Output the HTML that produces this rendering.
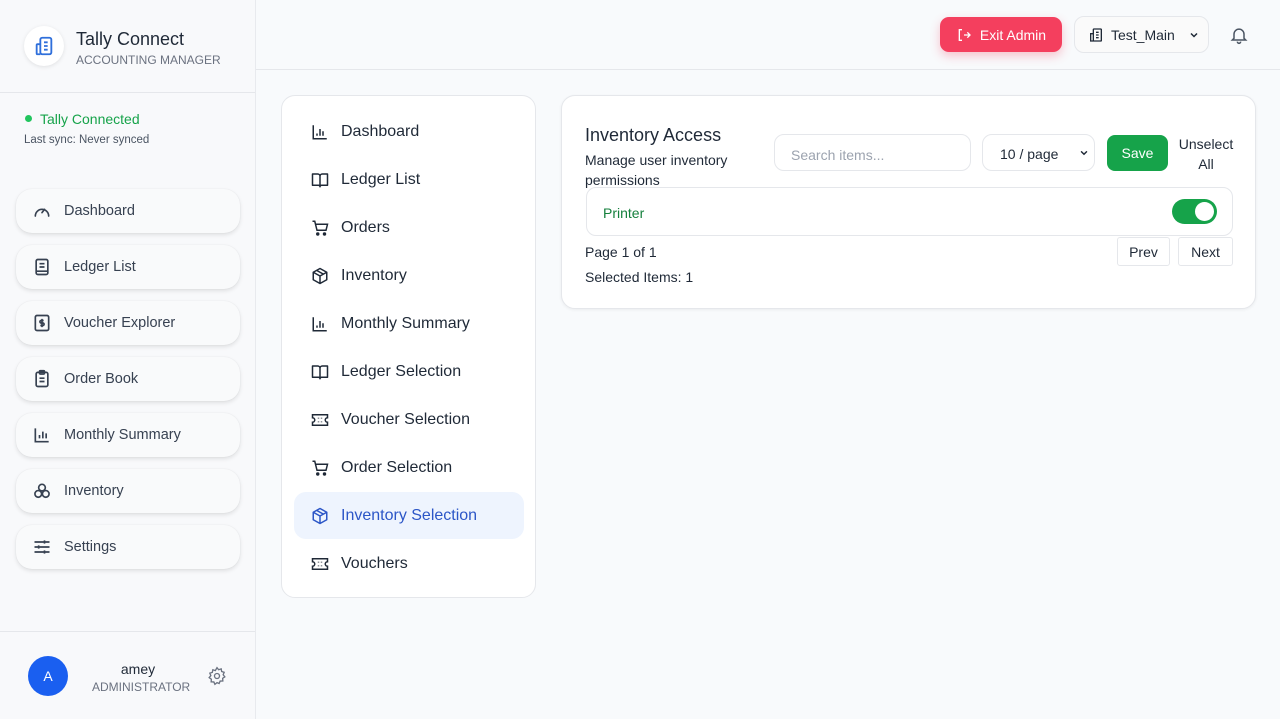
<!DOCTYPE html>
<html><head><meta charset="utf-8"><style>
*{box-sizing:border-box;margin:0;padding:0}
body{width:1280px;height:719px;overflow:hidden;background:#f8fafc;font-family:"Liberation Sans",sans-serif;color:#1f2937;position:relative}
.side{position:absolute;left:0;top:0;width:256px;height:719px;background:#f8f9fb;border-right:1px solid #e8eaee}
.logo{position:absolute;left:24px;top:26px;width:40px;height:40px;border-radius:50%;background:#fff;box-shadow:0 1px 4px rgba(0,0,0,.1);display:flex;align-items:center;justify-content:center}
.abs{position:absolute}
.nb{position:absolute;left:16px;width:224px;height:44px;border-radius:16px;background:#f9fafb;box-shadow:0 2px 4px rgba(0,0,0,.1),0 0 1px rgba(0,0,0,.1);display:flex;align-items:center;padding-left:16px;font-size:14.5px;color:#374151}
.nb svg{margin-right:12px}
.hdr{position:absolute;left:256px;top:0;right:0;height:70px;border-bottom:1px solid #e5e7eb}
.card{position:absolute;background:#fff;border:1px solid #e5e7eb;border-radius:14px}
.mi{position:absolute;left:12px;width:230px;height:47px;display:flex;align-items:center;padding-left:17px;font-size:16px;color:#1f2937;border-radius:12px}
.mi svg{margin-right:12px}
.mi.act{background:#eef4fe;color:#2c56c7}
</style></head><body>
<div class="side">
 <div class="logo"><svg width="22" height="22" viewBox="0 0 24 24" fill="none" stroke="#2f6fdb" stroke-width="2" stroke-linejoin="round"><rect x="8" y="3" width="12" height="18" rx="2"/><path d="M8 10H5a1 1 0 0 0-1 1v9a1 1 0 0 0 1 1h3M12 8h4M12 12h4M12 16h4"/></svg></div>
 <div class="abs" style="left:76px;top:29px;font-size:18px;color:#1f2937">Tally Connect</div>
 <div class="abs" style="left:76px;top:53px;font-size:12px;color:#6b7280">ACCOUNTING MANAGER</div>
 <div class="abs" style="left:0;top:92px;width:255px;border-top:1px solid #e5e7eb"></div>
 <div class="abs" style="left:25px;top:115px;width:7px;height:7px;border-radius:50%;background:#22c55e"></div>
 <div class="abs" style="left:40px;top:111px;font-size:14px;color:#16a34a">Tally Connected</div>
 <div class="abs" style="left:24px;top:134px;font-size:11.5px;color:#4b5563">Last sync: Never synced</div>
 <div class="nb" style="top:189px"><svg width="20" height="20" viewBox="0 0 24 24" fill="none" stroke="#374151" stroke-width="2" stroke-linecap="round"><path d="M4 18a8 8 0 1 1 16 0M12 14l3-4"/></svg>Dashboard</div>
 <div class="nb" style="top:245px"><svg width="20" height="20" viewBox="0 0 24 24" fill="none" stroke="#374151" stroke-width="2"><rect x="5" y="3" width="14" height="18" rx="2"/><path d="M9 8h6M9 12h6M5 17h14"/></svg>Ledger List</div>
 <div class="nb" style="top:301px"><svg width="20" height="20" viewBox="0 0 24 24" fill="none" stroke="#374151" stroke-width="2"><rect x="4" y="3" width="16" height="18" rx="2"/><path d="M14 9h-3a1.5 1.5 0 0 0 0 3h2a1.5 1.5 0 0 1 0 3h-3M12 7v10"/></svg>Voucher Explorer</div>
 <div class="nb" style="top:357px"><svg width="20" height="20" viewBox="0 0 24 24" fill="none" stroke="#374151" stroke-width="2"><rect x="5" y="4" width="14" height="17" rx="2"/><rect x="9" y="2" width="6" height="4" rx="1"/><path d="M9 11h6M9 15h6"/></svg>Order Book</div>
 <div class="nb" style="top:413px"><svg width="20" height="20" viewBox="0 0 24 24" fill="none" stroke="#374151" stroke-width="2"><path d="M4 4v16h16M9 16v-4M13 16V8M17 16v-6"/></svg>Monthly Summary</div>
 <div class="nb" style="top:469px"><svg width="20" height="20" viewBox="0 0 24 24" fill="none" stroke="#374151" stroke-width="2"><circle cx="12" cy="8" r="4"/><circle cx="7.5" cy="15.5" r="4"/><circle cx="16.5" cy="15.5" r="4"/></svg>Inventory</div>
 <div class="nb" style="top:525px"><svg width="20" height="20" viewBox="0 0 24 24" fill="none" stroke="#374151" stroke-width="2"><path d="M3 6h18M3 12h18M3 18h18M15 4v4M8 10v4M15 16v4"/></svg>Settings</div>
 <div class="abs" style="left:0;top:631px;width:255px;border-top:1px solid #e5e7eb"></div>
 <div class="abs" style="left:28px;top:656px;width:40px;height:40px;border-radius:50%;background:#1a5ff0;color:#fff;font-size:14px;display:flex;align-items:center;justify-content:center">A</div>
 <div class="abs" style="left:92px;top:661px;width:92px;text-align:center;font-size:14px;color:#1f2937">amey</div>
 <div class="abs" style="left:92px;top:680px;font-size:12px;color:#6b7280">ADMINISTRATOR</div>
 <svg class="abs" style="left:207px;top:666px" width="20" height="20" viewBox="0 0 24 24" fill="none" stroke="#6b7280" stroke-width="1.6"><circle cx="12" cy="12" r="3"/><path d="M12 2l2 2.5 3-1 .6 3.1 3 1-1.2 2.9 2 2.5-2.6 1.8.2 3.2-3.2.1-1.3 2.9L12 20l-2.5 2-1.3-2.9-3.2-.1.2-3.2L2.6 14l2-2.5L3.4 8.6l3-1L7 4.5l3 1z"/></svg>
</div>
<div class="hdr">
 <div class="abs" style="left:684px;top:17px;width:122px;height:35px;border-radius:9px;background:#f43f5e;box-shadow:0 4px 10px rgba(244,63,94,.3);color:#fff;font-size:14px;display:flex;align-items:center;justify-content:center;gap:8px"><svg width="16" height="16" viewBox="0 0 24 24" fill="none" stroke="#fff" stroke-width="2"><path d="M9 4H5v16h4M12 12h9M17 8l4 4-4 4"/></svg>Exit Admin</div>
 <div class="abs" style="left:818px;top:16px;width:135px;height:37px;border-radius:10px;background:#fafafa;border:1px solid #e5e7eb;font-size:14px;color:#1f2937;display:flex;align-items:center;padding-left:13px;gap:7px"><svg width="16" height="16" viewBox="0 0 24 24" fill="none" stroke="#1f2937" stroke-width="2"><rect x="8" y="3" width="12" height="18" rx="1"/><path d="M8 10H4v11h4M12 8h4M12 12h4M12 16h4"/></svg>Test_Main<svg style="margin-left:6px" width="12" height="12" viewBox="0 0 24 24" fill="none" stroke="#1f2937" stroke-width="3"><path d="M6 9l6 6 6-6"/></svg></div>
 <svg class="abs" style="left:973px;top:25px" width="20" height="20" viewBox="0 0 24 24" fill="none" stroke="#4b5563" stroke-width="1.8"><path d="M6 16V11a6 6 0 0 1 12 0v5l2 2H4zM10 20a2 2 0 0 0 4 0"/></svg>
</div>
<div class="card" style="left:281px;top:95px;width:255px;height:503px">
 <div class="mi" style="top:12px"><svg width="18" height="18" viewBox="0 0 24 24" fill="none" stroke="#1f2937" stroke-width="2"><path d="M3 3v18h18M8 17v-3M12 17V8M16 17v-6"/></svg>Dashboard</div>
 <div class="mi" style="top:60px"><svg width="18" height="18" viewBox="0 0 24 24" fill="none" stroke="#1f2937" stroke-width="2" stroke-linejoin="round"><path d="M2 4h7a3 3 0 0 1 3 3v14a2 2 0 0 0-2-2H2zM22 4h-7a3 3 0 0 0-3 3v14a2 2 0 0 1 2-2h8z"/></svg>Ledger List</div>
 <div class="mi" style="top:108px"><svg width="18" height="18" viewBox="0 0 24 24" fill="none" stroke="#1f2937" stroke-width="2"><path d="M2 3h3l3 12h12l2-8H6"/><circle cx="9" cy="20" r="1.3" fill="#1f2937"/><circle cx="18" cy="20" r="1.3" fill="#1f2937"/></svg>Orders</div>
 <div class="mi" style="top:156px"><svg width="18" height="18" viewBox="0 0 24 24" fill="none" stroke="#1f2937" stroke-width="2" stroke-linejoin="round"><path d="M12 2l9 5v10l-9 5-9-5V7zM3 7l9 5 9-5M12 12v10M7.5 4.5l9 5"/></svg>Inventory</div>
 <div class="mi" style="top:204px"><svg width="18" height="18" viewBox="0 0 24 24" fill="none" stroke="#1f2937" stroke-width="2"><path d="M3 3v18h18M8 17v-3M12 17V8M16 17v-6"/></svg>Monthly Summary</div>
 <div class="mi" style="top:252px"><svg width="18" height="18" viewBox="0 0 24 24" fill="none" stroke="#1f2937" stroke-width="2" stroke-linejoin="round"><path d="M2 4h7a3 3 0 0 1 3 3v14a2 2 0 0 0-2-2H2zM22 4h-7a3 3 0 0 0-3 3v14a2 2 0 0 1 2-2h8z"/></svg>Ledger Selection</div>
 <div class="mi" style="top:300px"><svg width="18" height="18" viewBox="0 0 24 24" fill="none" stroke="#1f2937" stroke-width="2"><path d="M2 5h20v4a3 3 0 0 0 0 6v4H2v-4a3 3 0 0 0 0-6zM10 9v1M10 14v1M14 9v1M14 14v1"/></svg>Voucher Selection</div>
 <div class="mi" style="top:348px"><svg width="18" height="18" viewBox="0 0 24 24" fill="none" stroke="#1f2937" stroke-width="2"><path d="M2 3h3l3 12h12l2-8H6"/><circle cx="9" cy="20" r="1.3" fill="#1f2937"/><circle cx="18" cy="20" r="1.3" fill="#1f2937"/></svg>Order Selection</div>
 <div class="mi act" style="top:396px"><svg width="18" height="18" viewBox="0 0 24 24" fill="none" stroke="#2c56c7" stroke-width="2" stroke-linejoin="round"><path d="M12 2l9 5v10l-9 5-9-5V7zM3 7l9 5 9-5M12 12v10M7.5 4.5l9 5"/></svg>Inventory Selection</div>
 <div class="mi" style="top:444px"><svg width="18" height="18" viewBox="0 0 24 24" fill="none" stroke="#1f2937" stroke-width="2"><path d="M2 5h20v4a3 3 0 0 0 0 6v4H2v-4a3 3 0 0 0 0-6zM10 9v1M10 14v1M14 9v1M14 14v1"/></svg>Vouchers</div>
</div>
<div class="card" style="left:561px;top:95px;width:695px;height:214px;box-shadow:0 1px 3px rgba(0,0,0,.06)">
 <div class="abs" style="left:23px;top:29px;font-size:18px;color:#1f2937">Inventory Access</div>
 <div class="abs" style="left:23px;top:54px;width:170px;font-size:14px;line-height:20px;color:#1f2937">Manage user inventory permissions</div>
 <div class="abs" style="left:212px;top:38px;width:197px;height:37px;border:1px solid #e5e7eb;border-radius:10px;padding:12px 0 0 16px;font-size:14px;color:#9ca3af">Search items...</div>
 <div class="abs" style="left:420px;top:38px;width:113px;height:37px;border:1px solid #e5e7eb;border-radius:10px;padding:11px 0 0 17px;font-size:14px;color:#1f2937">10 / page<svg class="abs" style="left:96px;top:13px" width="10" height="10" viewBox="0 0 24 24" fill="none" stroke="#1f2937" stroke-width="3.5"><path d="M5 8l7 7 7-7"/></svg></div>
 <div class="abs" style="left:545px;top:39px;width:61px;height:36px;border-radius:8px;background:#16a34a;color:#fff;font-size:14px;display:flex;align-items:center;justify-content:center">Save</div>
 <div class="abs" style="left:612px;top:38px;width:64px;text-align:center;font-size:14px;line-height:20px;color:#1f2937">Unselect All</div>
 <div class="abs" style="left:24px;top:91px;width:647px;height:49px;border:1px solid #e5e7eb;border-radius:10px;padding:17px 0 0 16px;font-size:14px;color:#15803d">Printer
  <div class="abs" style="left:585px;top:11px;width:45px;height:25px;border-radius:13px;background:#16a34a"><div class="abs" style="right:3px;top:3px;width:19px;height:19px;border-radius:50%;background:#fff"></div></div></div>
 <div class="abs" style="left:23px;top:148px;font-size:14px;color:#1f2937">Page 1 of 1</div>
 <div class="abs" style="left:23px;top:173px;font-size:14px;color:#1f2937">Selected Items: 1</div>
 <div class="abs" style="left:555px;top:141px;width:53px;height:29px;border:1px solid #e5e7eb;border-radius:3px;font-size:14px;display:flex;align-items:center;justify-content:center">Prev</div>
 <div class="abs" style="left:616px;top:141px;width:55px;height:29px;border:1px solid #e5e7eb;border-radius:3px;font-size:14px;display:flex;align-items:center;justify-content:center">Next</div>
</div>
</body></html>
